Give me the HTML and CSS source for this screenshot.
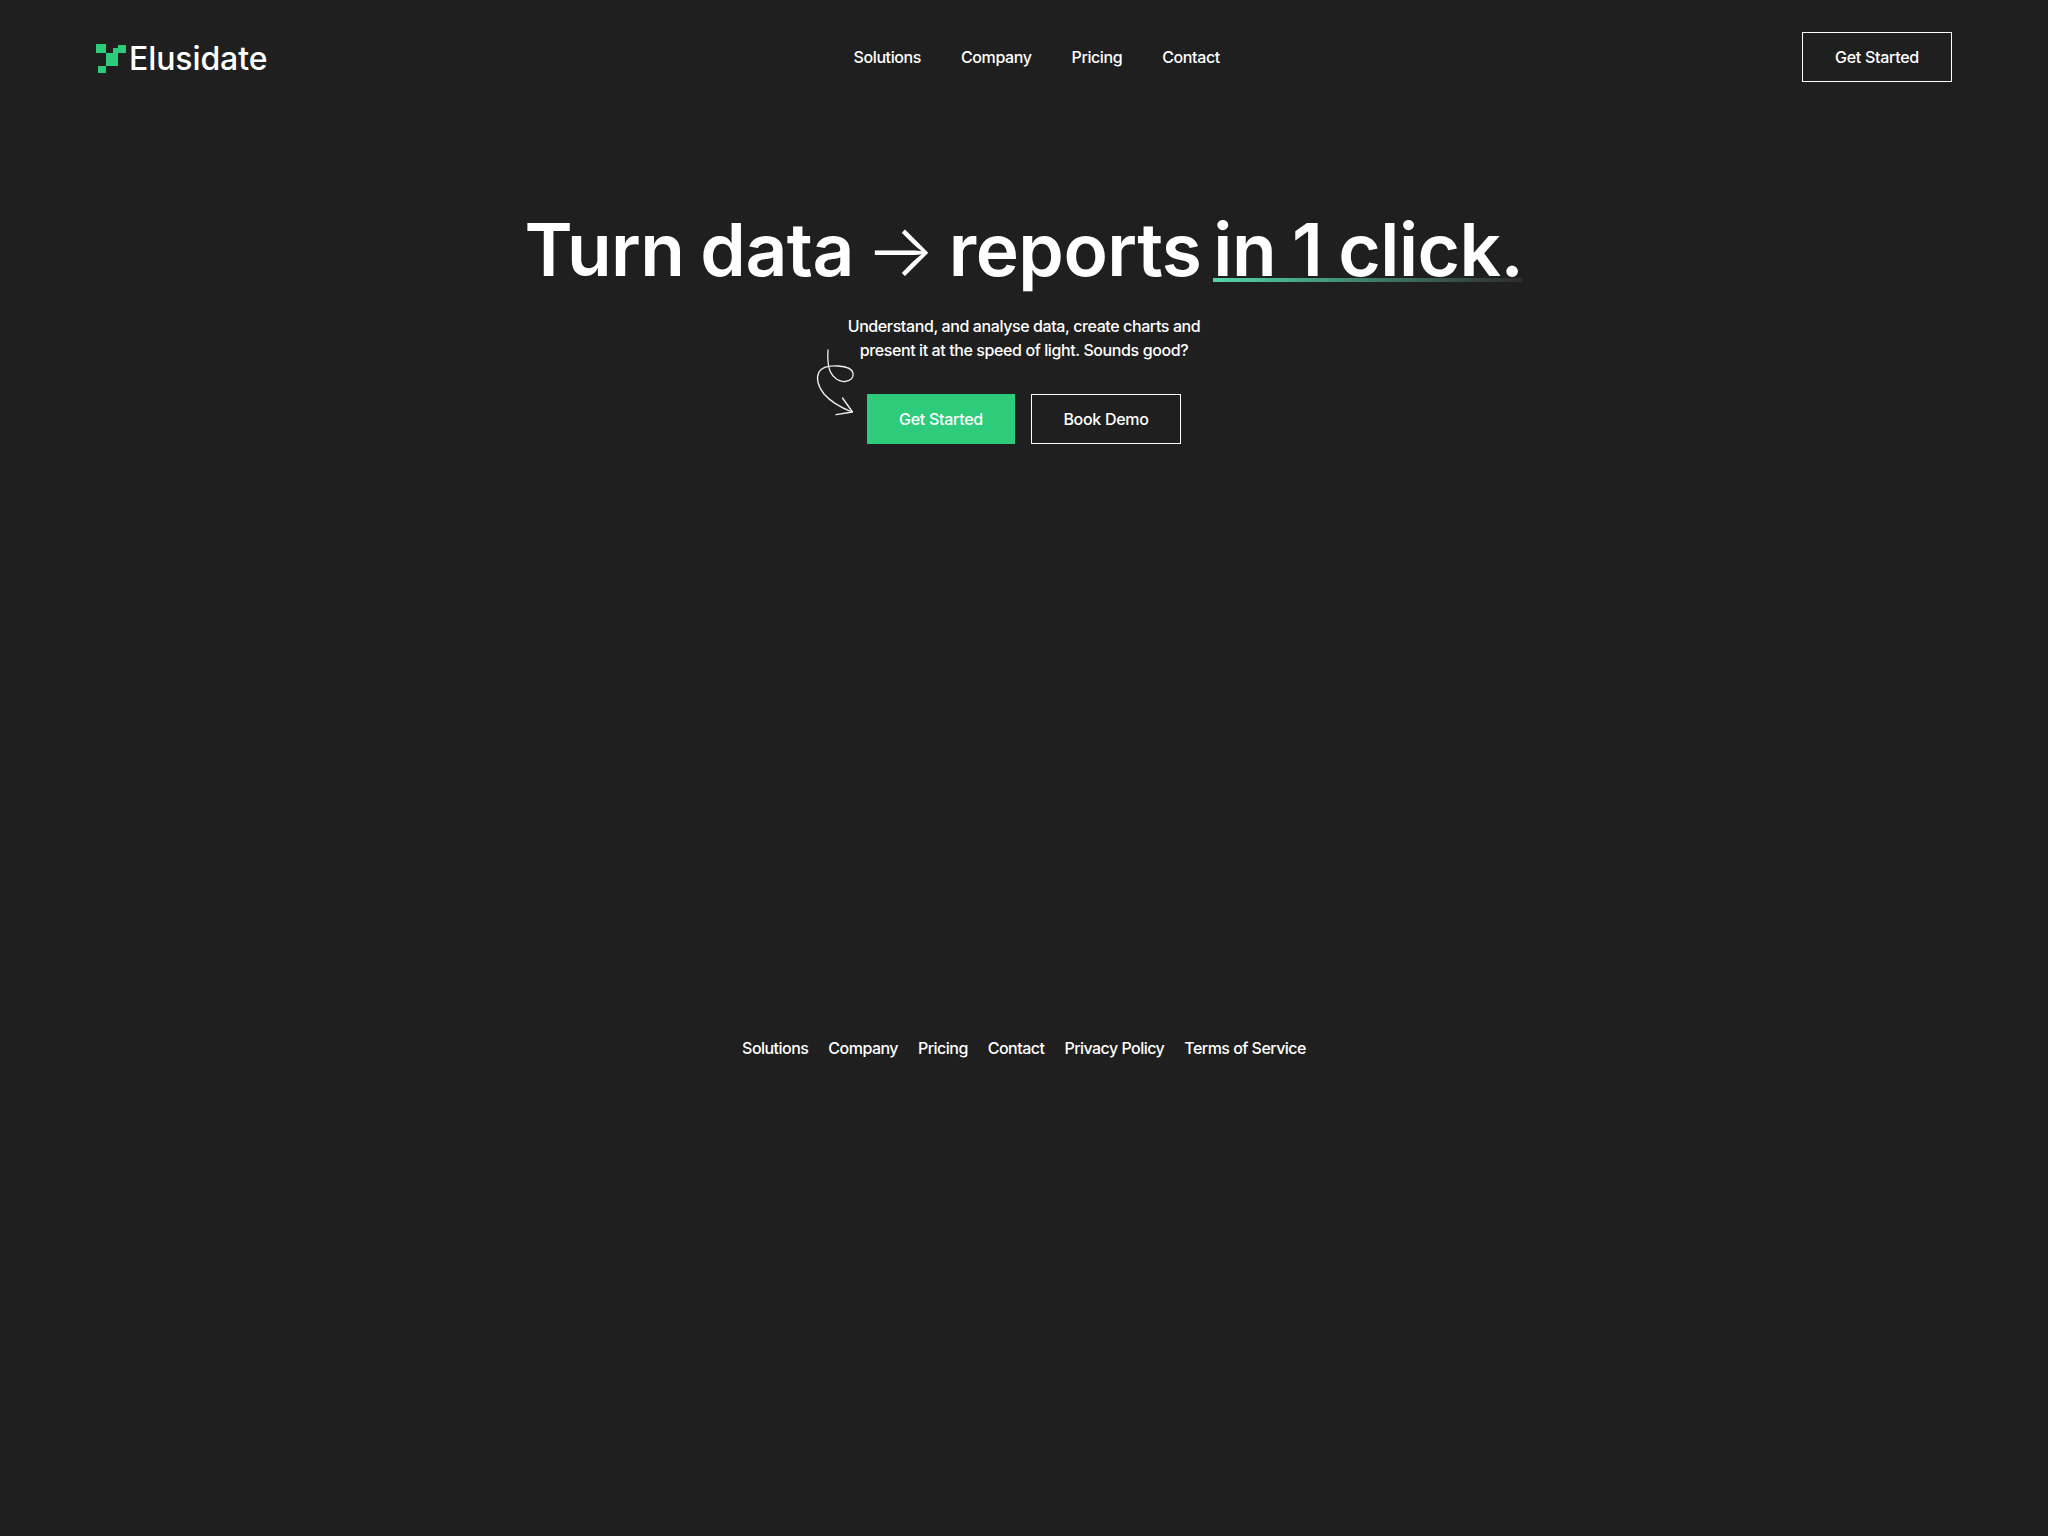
FILE: index.html
```html
<!DOCTYPE html>
<html lang="en">
<head>
  <meta charset="UTF-8" />
  <meta name="viewport" content="width=device-width, initial-scale=1.0"/>
  <title>Elusidate</title>
  <link rel="stylesheet" href="styles.css">
</head>
<body>
  <header class="topbar">
    <a class="logo" href="#">
      <svg class="logo_mark" viewBox="0 0 30 29" width="30" height="29">
        <path fill="#2ecc7a" d="M0 0h10v9H0zM22 1h8v8h-8zM10 9h7V4h5v18H10zM2 22h8v7H2z"/>
      </svg>
      <span>Elusidate</span>
    </a>
    <nav class="topnav">
      <a href="#">Solutions</a>
      <a href="#">Company</a>
      <a href="#">Pricing</a>
      <a href="#">Contact</a>
    </nav>
    <a class="btn btn_outline" href="#">Get Started</a>
  </header>

  <main class="hero">
    <h1>Turn data <span class="thin_arrow">→</span> reports <span class="underlined">in 1 click.</span></h1>
    <p>Understand, and analyse data, create charts and<br>present it at the speed of light. Sounds good?</p>
    <div class="hero_actions">
      <svg class="squiggle" viewBox="0 0 100 90" width="100" height="90" fill="none" stroke="#f2f2f2" stroke-width="1.3" stroke-linecap="round" stroke-linejoin="round">
        <path d="M28 10C27.500 18 27.500 25 30 31C33 38 39 42 45 41.500C51 41 54 37 53 33C52 28.500 46 26.500 38 26C30 25.500 22 27 19 32C16 38 18 46 24 54C30 61 42 68 52 72"/>
        <path d="M42.500 58L52.500 72L36 74.700"/>
      </svg>
      <a class="btn btn_green" href="#">Get Started</a>
      <a class="btn btn_outline" href="#">Book Demo</a>
    </div>
  </main>

  <footer class="bottomnav">
    <a href="#">Solutions</a>
    <a href="#">Company</a>
    <a href="#">Pricing</a>
    <a href="#">Contact</a>
    <a href="#">Privacy Policy</a>
    <a href="#">Terms of Service</a>
  </footer>
</body>
</html>
```

FILE: styles.css
```css
* {
  box-sizing: border-box;
}

body {
  margin: 0;
  min-height: 1536px;
  background-color: #1f1f1f;
  color: #fff;
  font-family: "Inter", "Liberation Sans", sans-serif;
  font-size: 16px;
}

a {
  color: #fff;
  text-decoration: none;
}

.topbar {
  display: flex;
  justify-content: space-between;
  align-items: center;
  padding: 32px 96px 0;
}

.logo {
  display: flex;
  align-items: center;
  gap: 3px;
  padding-top: 2px;
  font-size: 32px;
  font-weight: 500;
  letter-spacing: -0.1px;
}

.logo_mark {
  flex: none;
}

.topnav {
  display: flex;
  gap: 40px;
  margin-left: 4px;
  font-size: 16px;
  font-weight: 500;
  letter-spacing: -0.4px;
}

.btn {
  display: flex;
  align-items: center;
  justify-content: center;
  height: 50px;
  font-size: 16px;
  font-weight: 500;
  letter-spacing: -0.3px;
}

.btn_outline {
  width: 150px;
  border: 1px solid #fff;
}

.btn_green {
  width: 148px;
  background-color: #2ecc7a;
}

.hero {
  display: flex;
  flex-direction: column;
  align-items: center;
  padding-top: 124px;
}

.hero h1 {
  margin: 0;
  font-size: 73px;
  font-weight: 600;
  line-height: 88px;
  letter-spacing: -0.5px;
  word-spacing: -2px;
  white-space: nowrap;
}

.thin_arrow {
  margin: 0 -2px 0 -4px;
  font-weight: 300;
}

.underlined {
  position: relative;
  margin-left: -4px;
}

.underlined::after {
  content: "";
  position: absolute;
  left: 0;
  right: 0;
  bottom: 12px;
  height: 4px;
  background: linear-gradient(90deg, #52d6a8, #2f2a2e);
}

.hero p {
  margin: 20px 0 0;
  font-size: 16px;
  font-weight: 500;
  line-height: 24px;
  letter-spacing: -0.4px;
  text-align: center;
}

.hero_actions {
  position: relative;
  display: flex;
  gap: 16px;
  margin-top: 32px;
}

.squiggle {
  position: absolute;
  left: -67px;
  top: -54px;
}

.bottomnav {
  display: flex;
  justify-content: center;
  gap: 20px;
  margin-top: 592px;
  font-size: 16px;
  font-weight: 500;
  line-height: 24px;
  letter-spacing: -0.53px;
}
```
